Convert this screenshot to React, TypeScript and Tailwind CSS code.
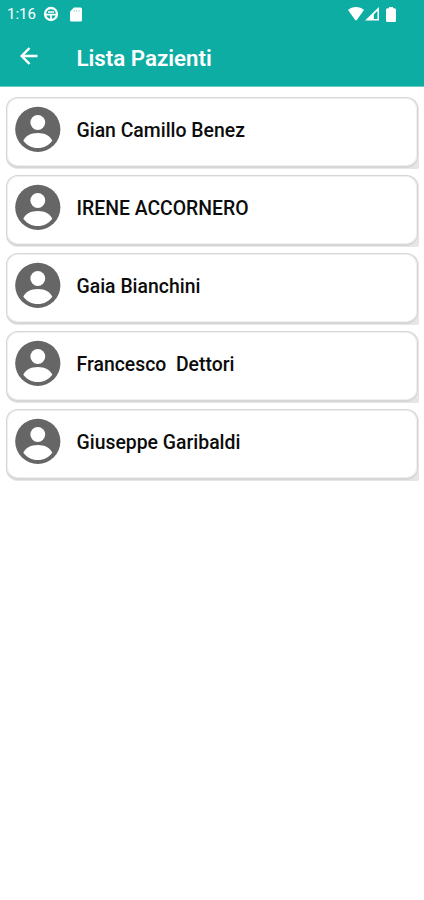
import React from 'react';

interface Patient {
  id: number;
  name: string;
}

const patients: Patient[] = [
  { id: 1, name: 'Gian Camillo Benez' },
  { id: 2, name: 'IRENE ACCORNERO' },
  { id: 3, name: 'Gaia Bianchini' },
  { id: 4, name: 'Francesco  Dettori' },
  { id: 5, name: 'Giuseppe Garibaldi' },
];

const StatusBar: React.FC = () => (
  <div className="flex h-7 items-center pl-[7px] pr-7">
    <span className="w-[30px] whitespace-nowrap text-[15px] leading-7">1:16</span>
    {/* Car mode */}
    <svg viewBox="0 0 16 16" className="ml-[6px] h-4 w-4" fill="none" stroke="currentColor">
      <circle cx="8" cy="8" r="6" strokeWidth="2.3" />
      <path d="M2.5 8.6h11M5 6h6M8 9v5" strokeWidth="1.7" />
    </svg>
    {/* SD card */}
    <svg viewBox="0 0 12 15" className="ml-[10.5px] h-[15px] w-3" fill="currentColor">
      <path d="M4 .5h6.5A1.5 1.5 0 0 1 12 2v11a1.5 1.5 0 0 1-1.5 1.5h-9A1.5 1.5 0 0 1 0 13V4.5z" />
      <path d="M4.3 3v1.6M6.7 3v1.6M9.1 3v1.6" stroke="#8fd8d3" strokeWidth="0.9" />
    </svg>
    <div className="ml-auto flex items-center">
      {/* Wifi */}
      <svg viewBox="0 0 16 14" className="h-[14px] w-4" fill="currentColor">
        <path d="M0 3C2 1 5 0 8 0s6 1 8 3L9 12.8a1.2 1.2 0 0 1-2 0z" />
      </svg>
      {/* Mobile signal */}
      <svg viewBox="0 0 14 14" className="ml-px mr-px h-[14px] w-[14px]" fill="currentColor">
        <path fillRule="evenodd" d="M14 0v13.5H0zM12.5 3.8L8.8 7.5V12H12.5z" />
      </svg>
      {/* Battery */}
      <svg viewBox="0 0 10 15" className="ml-[6px] h-[15px] w-[10px]" fill="currentColor">
        <path d="M3 0h4v1.3h1.5A1.5 1.5 0 0 1 10 2.8v10.7A1.5 1.5 0 0 1 8.5 15h-7A1.5 1.5 0 0 1 0 13.500V2.800a1.500 1.500 0 0 1 1.500-1.500H3z" />
      </svg>
    </div>
  </div>
);

const Avatar: React.FC = () => (
  <svg viewBox="0 0 46 46" className="h-[46px] w-[46px] shrink-0">
    <circle cx="22.8" cy="23.3" r="22.6" fill="#666666" />
    <circle cx="22.8" cy="16.5" r="7.4" fill="#ffffff" />
    <path
      d="M8.3 34.7C10.5 29.7 16 27 22.8 27S35 29.7 37.3 34.7C34 39.2 29 42 22.8 42S11.6 39.2 8.3 34.7z"
      fill="#ffffff"
    />
  </svg>
);

const PatientCard: React.FC<{ patient: Patient }> = ({ patient }) => (
  <li className="rounded-[12px] rounded-br-[2px] bg-[#e6e6e6] pr-px pb-px">
    <div className="flex h-[71px] items-start rounded-[12px] border border-b-2 border-[#d6d6d6] bg-white pt-2 pl-2 shadow-[inset_0_0_0_1px_#f0f0f0]">
      <Avatar />
      <span className="ml-[15.5px] whitespace-pre pt-[13px] text-[19.4px] leading-6 font-medium text-[#0c0c0c]">
        {patient.name}
      </span>
    </div>
  </li>
);

export default function App() {
  return (
    <div className="min-h-screen bg-white font-['Roboto',sans-serif]">
      <header className="h-[87px] border-b border-[#65cbc3] bg-[#0eada4] text-white">
        <StatusBar />
        <div className="flex h-14 items-center pl-[19.5px]">
          <svg viewBox="0 0 18 18" className="h-[18px] w-[18px]" fill="none" stroke="currentColor" strokeWidth="2.5">
            <path d="M9.5 1L1.7 9l7.8 8M1.5 9h16" />
          </svg>
          <h1 className="ml-[39px] pt-1 text-[22.3px] leading-7 font-semibold">Lista Pazienti</h1>
        </div>
      </header>

      <ul className="flex flex-col gap-[6px] pt-[10px] pr-[5px] pl-[6px]">
        {patients.map((patient) => (
          <PatientCard key={patient.id} patient={patient} />
        ))}
      </ul>
    </div>
  );
}
